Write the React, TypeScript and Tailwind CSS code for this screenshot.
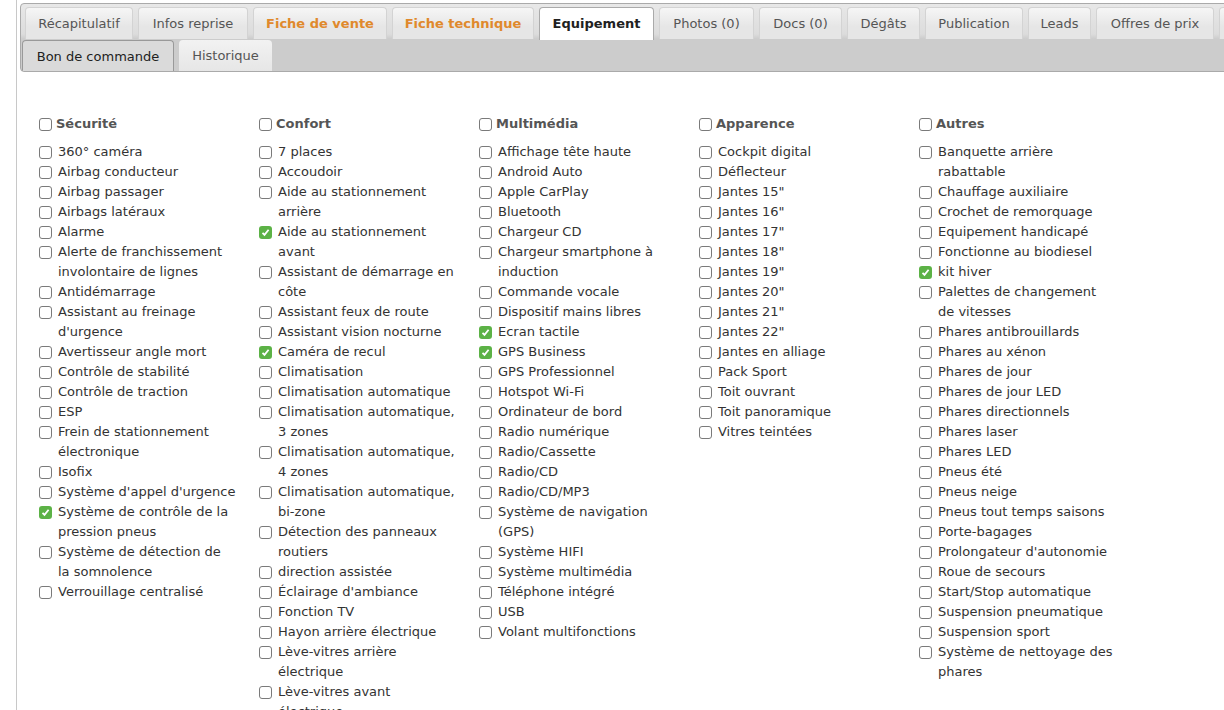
import React from 'react';

type Item = { label: string; checked?: boolean };

const tabsTop = [
    { name: 'Récapitulatif', w: 108 },
    { name: 'Infos reprise', w: 110 },
    { name: 'Fiche de vente', w: 134, orange: true },
    { name: 'Fiche technique', w: 142, orange: true },
    { name: 'Equipement', w: 115, active: true },
    { name: 'Photos (0)', w: 95 },
    { name: 'Docs (0)', w: 83 },
    { name: 'Dégâts', w: 73 },
    { name: 'Publication', w: 98 },
    { name: 'Leads', w: 63 },
    { name: 'Offres de prix', w: 118 },
    { name: 'Notes', w: 80 },
];

const groups: { title: string; items: Item[] }[] = [
    {
        title: 'Sécurité',
        items: [
            { label: '360° caméra' },
            { label: 'Airbag conducteur' },
            { label: 'Airbag passager' },
            { label: 'Airbags latéraux' },
            { label: 'Alarme' },
            { label: 'Alerte de franchissement involontaire de lignes' },
            { label: 'Antidémarrage' },
            { label: "Assistant au freinage d'urgence" },
            { label: 'Avertisseur angle mort' },
            { label: 'Contrôle de stabilité' },
            { label: 'Contrôle de traction' },
            { label: 'ESP' },
            { label: 'Frein de stationnement électronique' },
            { label: 'Isofix' },
            { label: "Système d'appel d'urgence" },
            { label: 'Système de contrôle de la pression pneus', checked: true },
            { label: 'Système de détection de la somnolence' },
            { label: 'Verrouillage centralisé' },
        ],
    },
    {
        title: 'Confort',
        items: [
            { label: '7 places' },
            { label: 'Accoudoir' },
            { label: 'Aide au stationnement arrière' },
            { label: 'Aide au stationnement avant', checked: true },
            { label: 'Assistant de démarrage en côte' },
            { label: 'Assistant feux de route' },
            { label: 'Assistant vision nocturne' },
            { label: 'Caméra de recul', checked: true },
            { label: 'Climatisation' },
            { label: 'Climatisation automatique' },
            { label: 'Climatisation automatique, 3 zones' },
            { label: 'Climatisation automatique, 4 zones' },
            { label: 'Climatisation automatique, bi-zone' },
            { label: 'Détection des panneaux routiers' },
            { label: 'direction assistée' },
            { label: "Éclairage d'ambiance" },
            { label: 'Fonction TV' },
            { label: 'Hayon arrière électrique' },
            { label: 'Lève-vitres arrière électrique' },
            { label: 'Lève-vitres avant électrique' },
        ],
    },
    {
        title: 'Multimédia',
        items: [
            { label: 'Affichage tête haute' },
            { label: 'Android Auto' },
            { label: 'Apple CarPlay' },
            { label: 'Bluetooth' },
            { label: 'Chargeur CD' },
            { label: 'Chargeur smartphone à induction' },
            { label: 'Commande vocale' },
            { label: 'Dispositif mains libres' },
            { label: 'Ecran tactile', checked: true },
            { label: 'GPS Business', checked: true },
            { label: 'GPS Professionnel' },
            { label: 'Hotspot Wi-Fi' },
            { label: 'Ordinateur de bord' },
            { label: 'Radio numérique' },
            { label: 'Radio/Cassette' },
            { label: 'Radio/CD' },
            { label: 'Radio/CD/MP3' },
            { label: 'Système de navigation (GPS)' },
            { label: 'Système HIFI' },
            { label: 'Système multimédia' },
            { label: 'Téléphone intégré' },
            { label: 'USB' },
            { label: 'Volant multifonctions' },
        ],
    },
    {
        title: 'Apparence',
        items: [
            { label: 'Cockpit digital' },
            { label: 'Déflecteur' },
            { label: 'Jantes 15"' },
            { label: 'Jantes 16"' },
            { label: 'Jantes 17"' },
            { label: 'Jantes 18"' },
            { label: 'Jantes 19"' },
            { label: 'Jantes 20"' },
            { label: 'Jantes 21"' },
            { label: 'Jantes 22"' },
            { label: 'Jantes en alliage' },
            { label: 'Pack Sport' },
            { label: 'Toit ouvrant' },
            { label: 'Toit panoramique' },
            { label: 'Vitres teintées' },
        ],
    },
    {
        title: 'Autres',
        items: [
            { label: 'Banquette arrière rabattable' },
            { label: 'Chauffage auxiliaire' },
            { label: 'Crochet de remorquage' },
            { label: 'Equipement handicapé' },
            { label: 'Fonctionne au biodiesel' },
            { label: 'kit hiver', checked: true },
            { label: 'Palettes de changement de vitesses' },
            { label: 'Phares antibrouillards' },
            { label: 'Phares au xénon' },
            { label: 'Phares de jour' },
            { label: 'Phares de jour LED' },
            { label: 'Phares directionnels' },
            { label: 'Phares laser' },
            { label: 'Phares LED' },
            { label: 'Pneus été' },
            { label: 'Pneus neige' },
            { label: 'Pneus tout temps saisons' },
            { label: 'Porte-bagages' },
            { label: "Prolongateur d'autonomie" },
            { label: 'Roue de secours' },
            { label: 'Start/Stop automatique' },
            { label: 'Suspension pneumatique' },
            { label: 'Suspension sport' },
            { label: 'Système de nettoyage des phares' },
        ],
    },
];

const Box = ({ checked }: { checked?: boolean }) =>
    checked ? (
        <span className="flex items-center justify-center w-[13px] h-[13px] shrink-0 rounded-[3px] bg-[#5cb246]">
            <svg width="9" height="9" viewBox="0 0 9 9">
                <path d="M1.5 4.8 L3.5 6.8 L7.6 1.8" fill="none" stroke="#fff" strokeWidth="1.8" />
            </svg>
        </span>
    ) : (
        <span className="block w-[13px] h-[13px] shrink-0 rounded-[3px] border border-[#7a7a7a] bg-white" />
    );

const App = () => {
    return (
        <div className="w-[1224px] h-[710px] overflow-hidden bg-white font-['DejaVu_Sans',Verdana,sans-serif] text-[13px]">
            <div className="ml-[16px] h-full border-l border-[#c8c8c8] pl-[3px] pt-[3px]">
                {/* tabs header */}
                <div className="w-[1240px] rounded-[4px] border border-[#aaaaaa] bg-[linear-gradient(to_bottom,#e8e8e8_0%,#dcdcdc_45%,#cccccc_52%,#cccccc_100%)] h-[69px] overflow-hidden">
                    <div className="flex gap-[5px] pl-[4px] pt-[3px] h-[36px]">
                        {tabsTop.map((t) => (
                            <div
                                key={t.name}
                                style={{ width: t.w }}
                                className={`shrink-0 flex items-center justify-center rounded-t-[4px] border border-b-0 ${
                                    t.active
                                        ? 'bg-white border-[#aaaaaa] text-[#212121] font-bold h-[33px]'
                                        : 'bg-[linear-gradient(to_bottom,#f6f6f6,#e6e6e6_60%,#e6e6e6)] border-[#d3d3d3] h-[32px]'
                                } ${t.orange ? 'text-[#e0892c] font-bold' : t.active ? '' : 'text-[#555555]'}`}
                            >
                                {t.name}
                            </div>
                        ))}
                    </div>
                    <div className="flex gap-[5px] pl-[1px] h-[32px]">
                        <div className="shrink-0 w-[152px] flex items-center justify-center rounded-t-[4px] border border-b-0 border-[#999999] bg-[#dadada] text-[#212121]">
                            Bon de commande
                        </div>
                        <div className="shrink-0 w-[93px] flex items-center justify-center rounded-t-[4px] bg-[linear-gradient(to_bottom,#f2f2f2,#e6e6e6)] text-[#555555]">
                            Historique
                        </div>
                    </div>
                </div>

                {/* equipment columns */}
                <div className="flex pl-[19px] pt-[42px]">
                    {groups.map((g) => (
                        <div key={g.title} className="w-[220px] shrink-0">
                            <div className="flex items-center gap-[4px] h-[20px] mb-[8px]">
                                <Box />
                                <span className="font-bold text-[#555555]">{g.title}</span>
                            </div>
                            {g.items.map((it) => (
                                <div key={it.label} className="flex items-start">
                                    <span className="mt-[4px] mr-[6px]">
                                        <Box checked={it.checked} />
                                    </span>
                                    <span className="w-[177.7px] leading-[20px] text-[#333333]">{it.label}</span>
                                </div>
                            ))}
                        </div>
                    ))}
                </div>
            </div>
        </div>
    );
};

export default App;
